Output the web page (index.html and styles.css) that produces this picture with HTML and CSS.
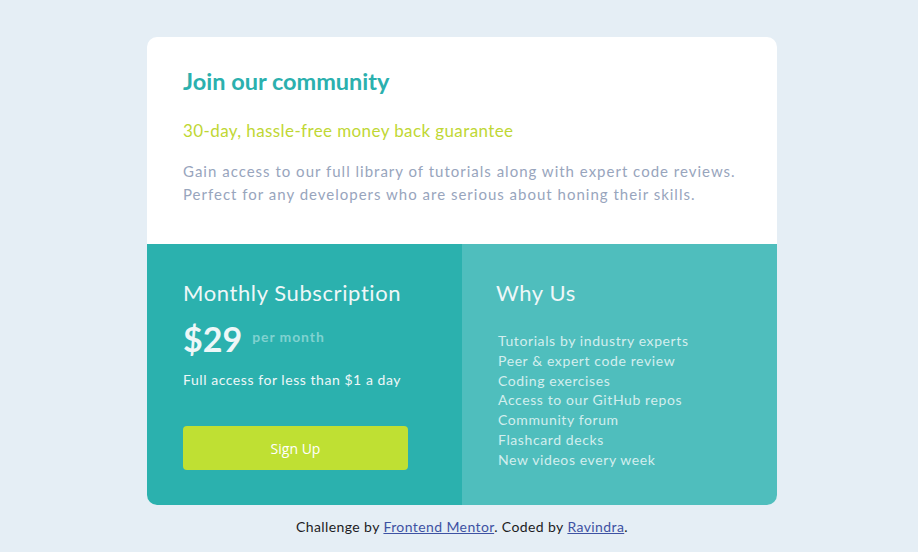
FILE: index.html
```html
<!DOCTYPE html>
<html lang="en">
<head>
<meta charset="utf-8">
<title>Single price grid component</title>
<link rel="stylesheet" href="styles.css">
</head>
<body>
<main class="card">
  <section class="intro">
    <h1 class="title">Join our community</h1>
    <h2 class="guarantee">30-day, hassle-free money back guarantee</h2>
    <p class="desc">Gain access to our full library of tutorials along with expert code reviews. Perfect for any developers who are serious about honing their skills.</p>
  </section>
  <div class="bottom">
    <section class="subscription">
      <h2 class="sub-title">Monthly Subscription</h2>
      <div class="price-row"><span class="price">$29</span><span class="per">per month</span></div>
      <p class="sub-text">Full access for less than $1 a day</p>
      <button class="signup">Sign Up</button>
    </section>
    <section class="why">
      <h2 class="why-title">Why Us</h2>
      <ul class="why-list">
        <li>Tutorials by industry experts</li>
        <li>Peer &amp; expert code review</li>
        <li>Coding exercises</li>
        <li>Access to our GitHub repos</li>
        <li>Community forum</li>
        <li>Flashcard decks</li>
        <li>New videos every week</li>
      </ul>
    </section>
  </div>
</main>
<footer class="attribution">Challenge by <a href="#">Frontend Mentor</a>. Coded by <a href="#">Ravindra</a>.</footer>
</body>
</html>
```
FILE: styles.css
```css
* { box-sizing: border-box; }
body {
  margin: 0;
  padding-left: 6px;
  background: #e5eef5;
  font-family: Lato, "Open Sans", sans-serif;
  display: flex;
  flex-direction: column;
  align-items: center;
  min-height: 552px;
}
.card {
  width: 630px;
  margin-top: 37px;
  border-radius: 10px;
  overflow: hidden;
  background: #fff;
}
.intro {
  height: 207px;
  padding: 30px 36px 0 36px;
}
.title {
  margin: 0;
  font-size: 23.5px;
  line-height: 28px;
  font-weight: 700;
  color: #2bb0ae;
}
.guarantee {
  margin: 26px 0 0;
  font-size: 17px;
  line-height: 20px;
  font-weight: 400;
  letter-spacing: 0.4px;
  color: #bfd735;
}
.desc {
  margin: 19px 0 0;
  font-size: 15px;
  line-height: 23px;
  letter-spacing: 1px;
  color: #98a5bd;
}
.bottom {
  display: flex;
  height: 261px;
}
.subscription {
  width: 315px;
  background: #2bb1ae;
  padding: 36px 36px 0;
  color: #fff;
}
.sub-title, .why-title {
  margin: 0;
  font-size: 22px;
  line-height: 26px;
  font-weight: 400;
  letter-spacing: 0.6px;
  color: #eef7f8;
}
.price-row {
  display: flex;
  align-items: center;
  margin-top: 13px;
  height: 38px;
}
.price {
  font-size: 34px;
  font-weight: 700;
  color: #eef7f8;
}
.per {
  margin-left: 10px;
  margin-top: -4px;
  font-size: 14px;
  font-weight: 700;
  letter-spacing: 0.9px;
  color: #80d2d0;
}
.sub-text {
  margin: 14px 0 0;
  font-size: 14px;
  line-height: 18px;
  letter-spacing: 0.55px;
  color: #eef7f8;
}
.signup {
  display: block;
  margin-top: 37px;
  width: 225px;
  height: 44px;
  border: 0;
  border-radius: 4px;
  background: #bfe033;
  color: #fff;
  font-family: "Open Sans", sans-serif;
  font-size: 14px;
}
.why {
  flex: 1;
  background: #4fbebd;
  padding: 36px 34px 0;
}
.why-list {
  list-style: none;
  margin: 25px 0 0;
  padding: 0 0 0 2px;
  font-size: 14px;
  line-height: 19.8px;
  letter-spacing: 0.6px;
  color: #d3eeee;
}
.attribution {
  margin-top: 13px;
  font-size: 14px;
  line-height: 18px;
  letter-spacing: 0.4px;
  color: #1c1c24;
}
.attribution a { color: #3e52a3; }
```
